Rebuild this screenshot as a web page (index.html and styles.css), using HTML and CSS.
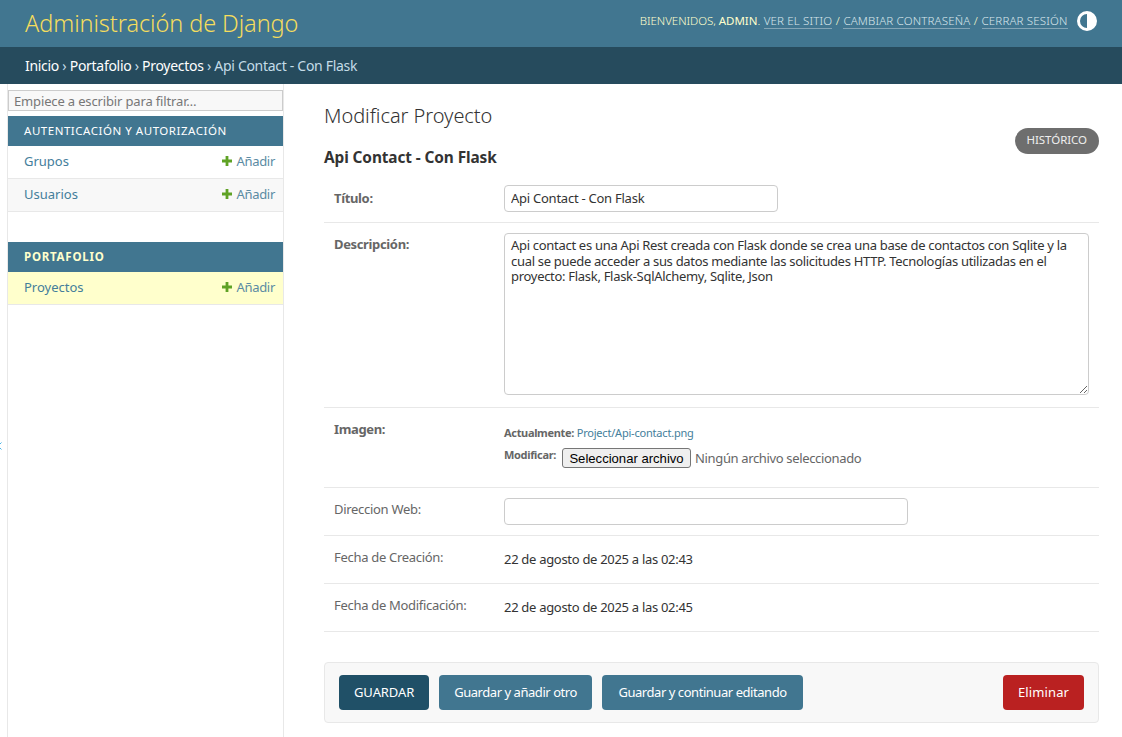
FILE: index.html
```html
<!DOCTYPE html>
<html lang="es">
<head>
	<meta charset="utf-8" />
	<title>Modificar Proyecto | Administración de Django</title>
	<link rel="stylesheet" href="styles.css">
</head>
<body>
<header class="site-header">
	<h1 class="brand">Administración de Django</h1>
	<div class="user-tools">
		<span class="welcome">Bienvenidos, <strong>admin</strong>.</span>
		<a href="#">Ver el sitio</a> /
		<a href="#">Cambiar contraseña</a> /
		<a href="#">Cerrar sesión</a>
		<svg class="theme-icon" width="20" height="20" viewBox="0 0 20 20">
			<circle cx="10" cy="10" r="8.5" fill="none" stroke="#fff" stroke-width="3"/>
			<path d="M10 1.5a8.5 8.5 0 0 1 0 17z" fill="#fff"/>
		</svg>
	</div>
</header>
<nav class="breadcrumbs">
	<a href="#">Inicio</a> › <a href="#">Portafolio</a> › <a href="#">Proyectos</a> › Api Contact - Con Flask
</nav>
<div class="main">
	<button class="nav-toggle"><svg width="7" height="10" viewBox="0 0 7 10"><path d="M1.5 1.5L-2 5l3.5 3.5" fill="none" stroke="#49b4e8"/></svg></button>
	<aside class="sidebar">
		<input class="nav-filter" type="search" placeholder="Empiece a escribir para filtrar…">
		<table class="app-list">
			<caption><a href="#">Autenticación y autorización</a></caption>
			<tr><th><a href="#">Grupos</a></th><td><a class="add" href="#"><svg width="10" height="10" viewBox="0 0 10 10"><path d="M3.6 0h2.8v3.6H10v2.8H6.4V10H3.6V6.4H0V3.6h3.6z" fill="#5fa225"/></svg>Añadir</a></td></tr>
			<tr class="alt"><th><a href="#">Usuarios</a></th><td><a class="add" href="#"><svg width="10" height="10" viewBox="0 0 10 10"><path d="M3.6 0h2.8v3.6H10v2.8H6.4V10H3.6V6.4H0V3.6h3.6z" fill="#5fa225"/></svg>Añadir</a></td></tr>
		</table>
		<table class="app-list current-app">
			<caption><a href="#">Portafolio</a></caption>
			<tr class="current"><th><a href="#">Proyectos</a></th><td><a class="add" href="#"><svg width="10" height="10" viewBox="0 0 10 10"><path d="M3.6 0h2.8v3.6H10v2.8H6.4V10H3.6V6.4H0V3.6h3.6z" fill="#5fa225"/></svg>Añadir</a></td></tr>
		</table>
	</aside>
	<main class="content">
		<div class="title-row">
			<div>
				<h1 class="page-title">Modificar Proyecto</h1>
				<h2 class="object-title">Api Contact - Con Flask</h2>
			</div>
			<a class="history" href="#">Histórico</a>
		</div>
		<form>
			<div class="form-row row-titulo">
				<label class="required">Título:</label>
				<input class="text-input title-input" type="text" value="Api Contact - Con Flask">
			</div>
			<div class="form-row row-desc">
				<label class="required">Descripción:</label>
				<textarea class="text-input desc-input">Api contact es una Api Rest creada con Flask donde se crea una base de contactos con Sqlite y la cual se puede acceder a sus datos mediante las solicitudes HTTP. Tecnologías utilizadas en el proyecto: Flask, Flask-SqlAlchemy, Sqlite, Json</textarea>
			</div>
			<div class="form-row row-image">
				<label class="required">Imagen:</label>
				<div class="file-field">
					<p class="file-line"><b>Actualmente:</b> <a href="#">Project/Api-contact.png</a></p>
					<p class="file-line change-line"><b>Modificar:</b> <button class="file-btn" type="button">Seleccionar archivo</button> <span class="file-name">Ningún archivo seleccionado</span></p>
				</div>
			</div>
			<div class="form-row row-url">
				<label>Direccion Web:</label>
				<input class="text-input url-input" type="text">
			</div>
			<div class="form-row row-read">
				<label>Fecha de Creación:</label>
				<div class="readonly">22 de agosto de 2025 a las 02:43</div>
			</div>
			<div class="form-row row-read">
				<label>Fecha de Modificación:</label>
				<div class="readonly">22 de agosto de 2025 a las 02:45</div>
			</div>
			<div class="submit-row">
				<button class="btn btn-default" type="button">Guardar</button>
				<button class="btn" type="button">Guardar y añadir otro</button>
				<button class="btn btn-continue" type="button">Guardar y continuar editando</button>
				<a class="btn btn-delete" href="#">Eliminar</a>
			</div>
		</form>
	</main>
</div>
</body>
</html>
```

FILE: styles.css
```css
*{
	box-sizing:border-box;
}

body{
	margin:0;
	font-family:"Noto Sans",sans-serif;
	font-size:14px;
	color:#333;
	background:#fff;
	height:737px;
	overflow:hidden;
}

a{
	color:#447e9b;
	text-decoration:none;
}

.site-header{
	display:flex;
	justify-content:space-between;
	align-items:center;
	height:47px;
	padding:0 25px;
	background:#417690;
}

.brand{
	margin:0 0 2px;
	font-size:23.5px;
	font-weight:300;
	letter-spacing:-.08px;
	color:#f5dd5d;
}

.user-tools{
	display:flex;
	align-items:center;
	gap:3.5px;
	padding-bottom:6px;
	font-size:11.5px;
	letter-spacing:.16px;
	text-transform:uppercase;
	color:#ffc;
	font-weight:300;
}

.user-tools strong{
	font-weight:400;
}

.welcome{
	letter-spacing:-.03px;
}

.user-tools a{
	color:#d9e6ec;
	border-bottom:1px solid rgba(255,255,255,.35);
}

.theme-icon{
	margin-left:6px;
}

.breadcrumbs{
	height:37px;
	padding:0 25px;
	background:#264b5d;
	color:#c4dce8;
	font-size:14px;
	line-height:37px;
	letter-spacing:-.3px;
}

.breadcrumbs a{
	color:#fff;
}

.main{
	display:flex;
	height:653px;
}

.nav-toggle{
	width:7px;
	padding:0;
	border:0;
	background:#fff;
	overflow:hidden;
	margin-top:70px;
}

.nav-toggle svg{
	display:block;
}

.sidebar{
	width:277px;
	flex:none;
	padding-top:6px;
	border-right:1px solid #e8e8e8;
	border-left:1px solid #e8e8e8;
}

.nav-filter{
	display:block;
	width:100%;
	height:21px;
	margin-bottom:5px;
	padding:2px 5px;
	border:1px solid #ccc;
	border-radius:0;
	background:#f8f8f8;
	font:13px "Noto Sans",sans-serif;
	letter-spacing:-.15px;
	color:#333;
	-webkit-appearance:none;
}

.nav-filter::placeholder{
	color:#777;
}

.app-list{
	width:100%;
	border-collapse:separate;
	border-spacing:0;
	margin-bottom:30px;
}

.app-list caption{
	height:30px;
	padding:0 16px;
	background:#417690;
	font-size:11.5px;
	line-height:30px;
	text-align:left;
	text-transform:uppercase;
	letter-spacing:.53px;
}

.app-list caption a{
	color:#fff;
}

.current-app caption{
	letter-spacing:.75px;
}

.current-app caption a{
	color:#ffc;
	font-weight:700;
}

.app-list tr{
	height:33px;
}

.app-list tr.alt{
	background:#f8f8f8;
}

.app-list tr.current{
	background:#ffc;
}

.app-list th,
.app-list td{
	border-bottom:1px solid #e8e8e8;
	font-size:13px;
}

.app-list th{
	padding:0 0 2px 16px;
	font-weight:400;
	text-align:left;
}

.app-list td{
	padding:0 8px 2px 0;
	text-align:right;
	letter-spacing:-.3px;
}

.add{
	color:#5b8ba3;
}

.add svg{
	margin-right:4px;
}

.content{
	flex:1;
	padding:16px 23px 0 40px;
}

.title-row{
	display:flex;
	justify-content:space-between;
	align-items:flex-end;
	height:65px;
}

.page-title{
	margin:0 0 24px;
	font-size:20px;
	font-weight:300;
	letter-spacing:-.05px;
	line-height:24px;
}

.object-title{
	margin:-3px 0 -2px;
	font-size:15.4px;
	line-height:18px;
	font-weight:700;
	letter-spacing:-.1px;
}

.history{
	display:block;
	height:26px;
	margin-bottom:11px;
	padding:0 12px;
	background:#6e6e6e;
	border-radius:13px;
	color:#eee;
	font-size:11.5px;
	line-height:24px;
	letter-spacing:-.05px;
	text-transform:uppercase;
}

.form-row{
	display:flex;
	border-bottom:1px solid #e8e8e8;
	padding:0 10px;
}

.form-row label{
	flex:none;
	width:170px;
	font-size:13px;
	color:#666;
	letter-spacing:-.3px;
}

.form-row label.required{
	font-weight:700;
	letter-spacing:-.35px;
}

.text-input{
	border:1px solid #ccc;
	border-radius:4px;
	padding:5px 6px;
	font:13px "Noto Sans",sans-serif;
	letter-spacing:-.25px;
	color:#333;
}

.row-titulo{
	height:58px;
	padding-top:20px;
}

.row-titulo label{
	padding-top:4px;
}

.title-input{
	width:274px;
	height:27px;
	padding:4px 6px 6px;
}

.row-desc{
	height:185px;
	padding-top:10px;
}

.row-desc label{
	padding-top:2px;
}

.desc-input{
	width:585px;
	height:162px;
	padding-top:4px;
	line-height:15.5px;
	letter-spacing:-.3px;
	resize:vertical;
}

.row-image{
	height:80px;
	padding-top:12px;
}

.file-field{
	padding-top:5px;
}

.file-line{
	margin:0;
	font-size:11px;
	color:#666;
	letter-spacing:-.2px;
}

.file-line b{
	letter-spacing:-.33px;
}

.change-line{
	display:flex;
	align-items:flex-start;
	gap:6px;
	margin-top:7px;
}

.file-btn{
	width:129px;
	height:20px;
	margin-top:1px;
	padding:0;
	border:1px solid #767676;
	border-radius:3px;
	background:#efefef;
	color:#000;
	font:13.1px "Liberation Sans",sans-serif;
	letter-spacing:0;
}

.file-name{
	font-size:13px;
	line-height:23px;
	color:#666;
	letter-spacing:-.35px;
	margin-left:-2px;
}

.row-url{
	height:48px;
	padding-top:10px;
}

.row-url label{
	padding-top:2px;
}

.url-input{
	width:404px;
	height:27px;
}

.row-read{
	height:48px;
	padding-top:12px;
}

.readonly{
	font-size:13px;
	padding-top:2px;
	letter-spacing:-.3px;
}

.submit-row{
	display:flex;
	gap:10px;
	height:61px;
	margin-top:30px;
	padding:12px 14px;
	background:#f8f8f8;
	border:1px solid #e8e8e8;
	border-radius:4px;
}

.btn{
	display:block;
	height:35px;
	padding:0 15px;
	border:0;
	border-radius:4px;
	background:#417690;
	color:#fff;
	font:13px/35px "Noto Sans",sans-serif;
	letter-spacing:-.45px;
}

.btn-default{
	background:#205067;
	text-transform:uppercase;
	letter-spacing:-.1px;
}

.btn-continue{
	padding:0 16.5px;
}

.btn-delete{
	margin-left:auto;
	background:#ba2121;
	letter-spacing:.1px;
}
```
